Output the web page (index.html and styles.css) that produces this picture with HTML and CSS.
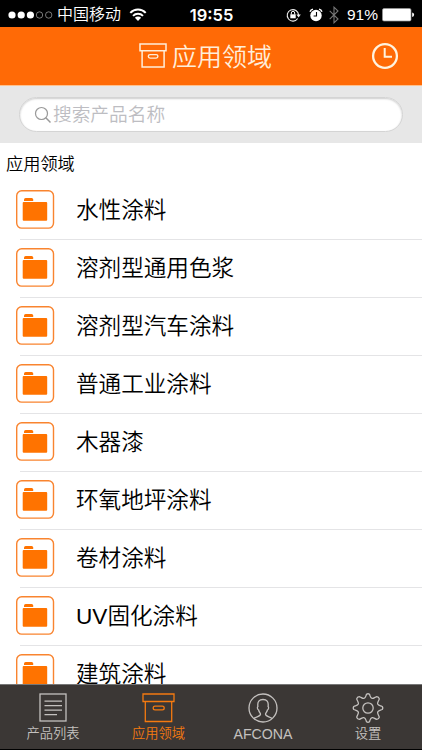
FILE: index.html
```html
<!DOCTYPE html>
<html lang="zh-CN">
<head>
	<meta charset="UTF-8">
	<meta name="viewport" content="width=device-width, initial-scale=1">
	<title>应用领域</title>
	<link rel="stylesheet" href="styles.css">
</head>
<body>
	<!-- 公用图标 -->
	<svg class="hidden">
		<symbol id="folder" viewBox="0 0 39 39">
			<rect x="0.7" y="0.7" width="36.8" height="37.4" rx="5" fill="#fff" stroke="#f9842f" stroke-width="1.400"/>
			<path d="M8 11V9.500q0-1.500 1.700-1.500h6q1.500 0 1.500 1.500V11z" fill="#ff7300"/>
			<rect x="6.700" y="12" width="24.500" height="18.700" rx="1" fill="#ff7300"/>
		</symbol>
		<symbol id="box" viewBox="0 0 33 30">
			<path d="M1 1h31v7.500H1zM3.300 8.500h26.400V28.500H3.300z" fill="none" stroke="currentColor" stroke-width="1.300"/>
			<rect x="11.200" y="13.200" width="11" height="3.700" rx="1.850" fill="none" stroke="currentColor" stroke-width="1.300"/>
		</symbol>
	</svg>

	<div class="outer">
		<div class="status">
			<div class="status-left">
				<svg class="signal" width="46" height="10" viewBox="0 0 46 10">
					<g fill="#fff">
						<circle cx="4" cy="5" r="3.600"/>
						<circle cx="13.200" cy="5" r="3.600"/>
						<circle cx="22.400" cy="5" r="3.600"/>
					</g>
					<g fill="none" stroke="#aaa" stroke-width="0.700">
						<circle cx="31.500" cy="5" r="3.200"/>
						<circle cx="40.700" cy="5" r="3.200"/>
					</g>
				</svg>
				<span class="carrier">中国移动</span>
				<svg class="wifi" width="18" height="14" viewBox="0 0 18 14">
					<path d="M1.300 4.900a10.600 10.600 0 0 1 15.400 0M4 7.900a7 7 0 0 1 10 0" fill="none" stroke="#fff" stroke-width="2"/>
					<path d="M9 13L5.900 9.800a4.400 4.400 0 0 1 6.200 0z" fill="#fff"/>
				</svg>
			</div>
			<span class="time">19:55</span>
			<div class="status-right">
				<svg width="15" height="14" viewBox="0 0 15 14">
					<path d="M11.700 10.500A5.700 5.700 0 1 1 12.600 7" fill="none" stroke="#eee" stroke-width="1.100"/>
					<path d="M10.400 6.600h4.400l-2.200 2.800z" fill="#eee"/>
					<rect x="4.300" y="6.300" width="5.400" height="4" fill="#fff"/>
					<path d="M5.300 6.500V5a1.700 1.700 0 0 1 3.400 0v1.500" fill="none" stroke="#fff"/>
				</svg>
				<svg class="alarm" width="14" height="14" viewBox="0 0 14 14">
					<circle cx="7" cy="7.500" r="5.700" fill="#fff"/>
					<path d="M1 3.800a4 4 0 0 1 3-2.700M13 3.800a4 4 0 0 0-3-2.700" fill="none" stroke="#fff" stroke-width="1.400"/>
					<path d="M7.500 4v4H4.600" fill="none" stroke="#000" stroke-width="1.100"/>
				</svg>
				<svg class="bluetooth" width="10" height="18" viewBox="0 0 10 18">
					<path d="M0.700 4.800l8.300 8.200L5 16.800V1.200L9 5 0.700 13.200" fill="none" stroke="#777" stroke-width="1.100"/>
				</svg>
				<span class="percent">91%</span>
				<svg class="battery" width="33" height="14" viewBox="0 0 33 14">
					<rect x="0.500" y="0.500" width="28.500" height="12.500" rx="1.500" fill="#fff" stroke="#999" stroke-width="0.700"/>
					<path d="M30.200 4.500q1.900.5 1.900 2.300t-1.900 2.300z" fill="#fff"/>
				</svg>
			</div>
		</div>

		<div class="header">
			<svg class="header-box" width="28" height="26" viewBox="0 0 28 26">
				<path d="M1 1.100h26v6.700H1zM3.100 7.800h22v16.300H3.100z" fill="none" stroke="#ffeeda" stroke-width="1.500"/>
				<rect x="9.300" y="11.600" width="9.600" height="3.500" rx="1.750" fill="none" stroke="#ffeeda" stroke-width="1.400"/>
			</svg>
			<h1>应用领域</h1>
			<svg class="history" width="28" height="28" viewBox="0 0 28 28">
				<circle cx="14" cy="14" r="11.900" fill="none" stroke="#fff3df" stroke-width="2.300"/>
				<path d="M13.700 6v8.700h7.300" fill="none" stroke="#fff3df" stroke-width="2"/>
			</svg>
		</div>

		<div class="search">
			<div class="search-box">
				<svg width="18" height="18" viewBox="0 0 18 18">
					<circle cx="7.500" cy="7.500" r="6" fill="none" stroke="#999" stroke-width="1.200"/>
					<path d="M11.800 11.800l4.700 4.700" stroke="#999" stroke-width="1.500"/>
				</svg>
				<span>搜索产品名称</span>
			</div>
		</div>

		<div class="content">
			<h2>应用领域</h2>
			<ul>
				<li><svg><use href="#folder"/></svg><span>水性涂料</span></li>
				<li><svg><use href="#folder"/></svg><span>溶剂型通用色浆</span></li>
				<li><svg><use href="#folder"/></svg><span>溶剂型汽车涂料</span></li>
				<li><svg><use href="#folder"/></svg><span>普通工业涂料</span></li>
				<li><svg><use href="#folder"/></svg><span>木器漆</span></li>
				<li><svg><use href="#folder"/></svg><span>环氧地坪涂料</span></li>
				<li><svg><use href="#folder"/></svg><span>卷材涂料</span></li>
				<li><svg><use href="#folder"/></svg><span>UV固化涂料</span></li>
				<li><svg><use href="#folder"/></svg><span>建筑涂料</span></li>
			</ul>
		</div>

		<div class="tabs">
			<div class="tab">
				<svg width="30" height="30" viewBox="0 0 30 30" fill="none" stroke="currentColor">
					<rect x="2" y="1" width="26" height="27" stroke-width="1.300"/>
					<path d="M6.500 8.200h17.500M6.500 12.700h17.500M6.500 17.200h17.500M6.500 21.700h12.500" stroke-width="1.200"/>
				</svg>
				<span>产品列表</span>
			</div>
			<div class="tab active">
				<svg width="33" height="30"><use href="#box"/></svg>
				<span>应用领域</span>
			</div>
			<div class="tab">
				<svg width="30" height="30" viewBox="0 0 30 30" fill="none" stroke="currentColor" stroke-width="1.300">
					<circle cx="15" cy="15" r="14"/>
					<path d="M6 25.500c1.500-1.800 6.500-2 6.500-4.200 0-1.300-1.300-1.900-1.900-4.300-1.300-.5-1.500-3-.7-3.600C9.200 8.500 11.300 6.500 15 6.500s5.800 2 5.100 6.900c.8.600.6 3.100-.7 3.600-.6 2.400-1.900 3-1.900 4.300 0 2.200 5 2.400 6.500 4.200"/>
				</svg>
				<span class="en">AFCONA</span>
			</div>
			<div class="tab">
				<svg width="32" height="30" viewBox="0 0 32 30" fill="none" stroke="currentColor" stroke-width="1.300" stroke-linejoin="round">
					<circle cx="16" cy="15" r="5.200"/>
					<path d="M14.500 1.300Q16 .2 17.500 1.300C18.300 3.500 18.300 5 20 5.300 21.500 5.800 22.600 4.300 24.800 3.600Q26.800 3.600 27.300 5.800C26.700 8 25.200 9.300 25.700 11 26.300 12.500 28.200 12.600 30.200 13.500Q31.300 15 30.200 16.500C28.200 17.400 26.300 17.500 25.700 19 25.200 20.700 26.700 22 27.300 24.200Q26.800 26.400 24.800 26.400C22.600 25.700 21.500 24.200 20 24.700 18.300 25 18.300 26.500 17.500 28.700Q16 29.800 14.500 28.700C13.700 26.500 13.700 25 12 24.700 10.500 24.200 9.400 25.700 7.200 26.400Q5.200 26.400 4.700 24.200C5.300 22 6.800 20.700 6.300 19 5.700 17.500 3.800 17.400 1.800 16.500Q.7 15 1.800 13.500C3.800 12.600 5.700 12.500 6.300 11 6.800 9.300 5.300 8 4.700 5.800Q5.200 3.600 7.200 3.600C9.400 4.300 10.500 5.800 12 5.300 13.700 5 13.700 3.500 14.500 1.300z"/>
				</svg>
				<span>设置</span>
			</div>
		</div>
	</div>
</body>
</html>
```

FILE: styles.css
```css
/*common*/
*{
	margin: 0;
	padding: 0;
	box-sizing: border-box;
}
body{
	font-family: "Liberation Sans", "Noto Sans CJK SC", sans-serif;
	background-color: #000;
}
svg{
	display: block;
	flex: none;
}
ul{
	list-style: none;
}
.hidden{
	display: none;
}
.outer{
	width: 422px;
	height: 750px;
	display: flex;
	flex-direction: column;
	overflow: hidden;
	white-space: nowrap;
}

/*status*/
.status{
	height: 27px;
	flex: none;
	display: grid;
	grid-template-columns: 1fr auto 1fr;
	align-items: center;
	padding: 2px 7px 0 8px;
	color: #fff;
	background-color: #000;
}
.status-left,
.status-right{
	display: flex;
	align-items: center;
}
.status-right{
	justify-content: flex-end;
}
.carrier{
	margin-left: 3px;
	padding-top: 1px;
	font-size: 16px;
	font-weight: 350;
	line-height: 24px;
}
.wifi{
	margin-left: 8px;
}
.time{
	font-family: Inter, sans-serif;
	font-size: 16.5px;
	font-weight: 600;
}
.alarm{
	margin-left: 8px;
}
.bluetooth{
	margin-left: 6px;
}
.percent{
	margin: 0 4px 0 8px;
	font-family: "Liberation Sans", sans-serif;
	font-size: 15.5px;
}

/*header*/
.header{
	height: 59px;
	flex: none;
	display: grid;
	grid-template-columns: 28px 100px 28px;
	column-gap: 5px;
	align-items: center;
	padding-left: 139px;
	color: #ffeeda;
	background-color: #ff6a06;
	border-bottom: 1px solid #ffc18c;
}
.header h1{
	padding-top: 1px;
	font-size: 25px;
	font-weight: 350;
	line-height: 36px;
}
.header .history{
	margin-left: 94px;
}

/*search*/
.search{
	height: 57px;
	flex: none;
	padding: 11px 19px 0;
	background-color: #e7e7e7;
}
.search-box{
	height: 35px;
	display: flex;
	align-items: center;
	padding-left: 14px;
	border: 1px solid #d4d4d4;
	border-radius: 18px;
	background-color: #fff;
	box-shadow: inset 0 1px 2px #ccc;
}
.search-box span{
	margin-left: 1px;
	font-size: 18.7px;
	font-weight: 350;
	line-height: 28px;
	color: #bdbdc2;
}

/*list*/
.content{
	flex: 1;
	min-height: 0;
	overflow: hidden;
	color: #000;
	background-color: #fff;
}
.content h2{
	height: 39px;
	padding-left: 6px;
	font-size: 17.2px;
	font-weight: 350;
	line-height: 42px;
}
.content li{
	height: 58px;
	display: flex;
	align-items: center;
	margin-left: 20px;
	border-bottom: 1px solid #e4e4e6;
}
.content li svg{
	width: 39px;
	height: 39px;
	margin-left: -4px;
	margin-bottom: 2px;
}
.content li span{
	margin-left: 21px;
	padding-top: 1px;
	font-size: 22.6px;
	font-weight: 350;
	line-height: 34px;
}

/*tabs*/
.tabs{
	height: 66px;
	flex: none;
	display: grid;
	grid-template-columns: 106px 105px 104px 106px;
	border-top: 1px solid #777;
	border-bottom: 1px solid #000;
	background-color: #3b3735;
}
.tab{
	display: flex;
	flex-direction: column;
	align-items: center;
	padding-top: 8px;
	color: #c4c1bf;
}
.tab span{
	padding-top: 1px;
	font-size: 13.3px;
	font-weight: 350;
	line-height: 20px;
}
.tab .en{
	font-size: 14.2px;
}
.tab.active{
	color: #f47a10;
}
```
